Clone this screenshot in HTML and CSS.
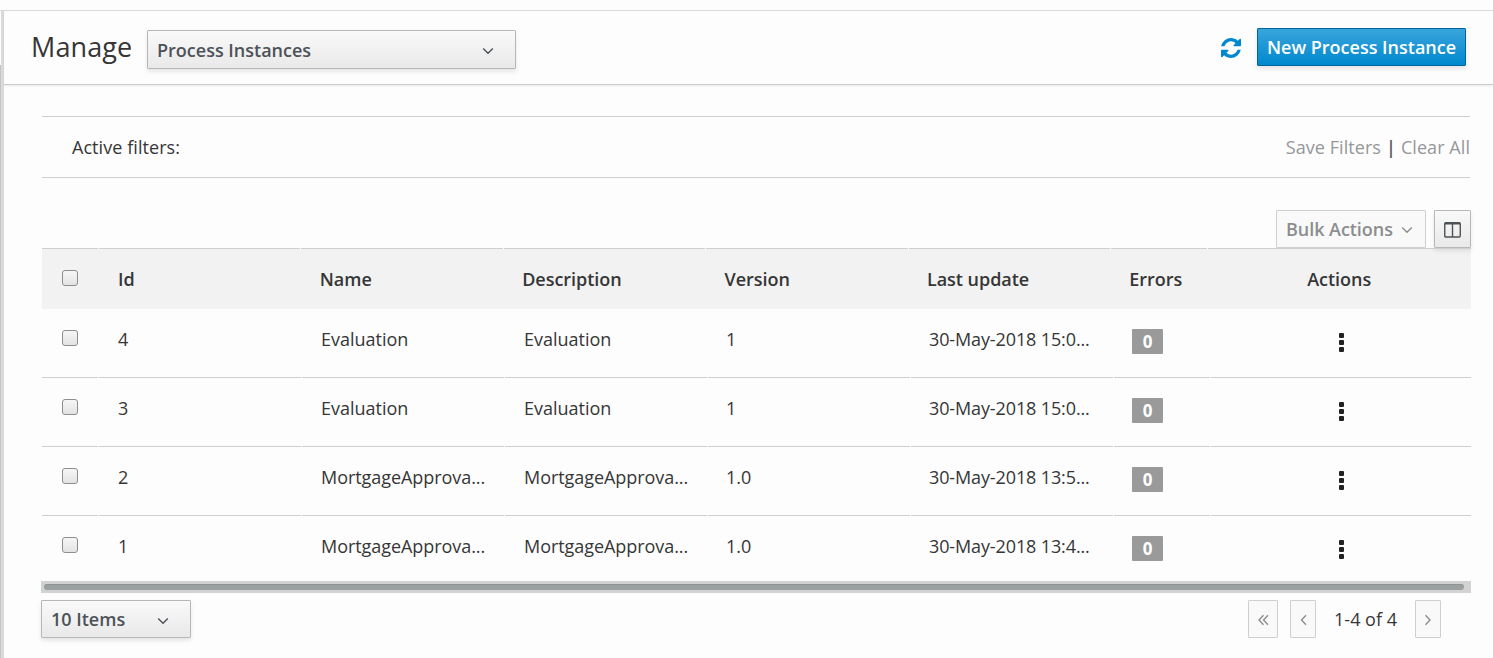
FILE: index.html
```
<!DOCTYPE html>
<html lang="en">
<head>
<meta charset="utf-8">
<title>Manage Process Instances</title>
<link rel="stylesheet" href="styles.css">
</head>
<body>
<div class="rail"><div class="rail-edge"></div></div>
<main class="page">
  <header class="topbar">
    <h1 class="title">Manage</h1>
    <button class="btn select"><span>Process Instances</span><svg class="chev" viewBox="0 0 12 8"><path d="M1.2 1.400 6 6.200 10.800 1.400"/></svg></button>
    <svg class="refresh" viewBox="0 0 1536 1536"><path d="M1511 928q0 5-1 7-64 268-268 434.500T764 1536q-146 0-282.500-55T238 1324l-129 129q-19 19-45 19t-45-19-19-45V960q0-26 19-45t45-19h448q26 0 45 19t19 45-19 45l-137 137q71 66 161 102t187 36q134 0 250-65t186-179q11-17 53-117 8-23 30-23h192q13 0 22.500 9.500t9.500 22.500zm25-800v448q0 26-19 45t-45 19h-448q-26 0-45-19t-19-45 19-45l138-138Q969 256 768 256q-134 0-250 65T332 500q-11 17-53 117-8 23-30 23H50q-13 0-22.500-9.500T18 608v-7q65-268 270-434.500T768 0q146 0 284 55.500T1297 212l130-129q19-19 45-19t45 19 19 45z"/></svg>
    <button class="btn primary">New Process Instance</button>
  </header>
  <section class="content">
    <div class="filters">
      <span>Active filters:</span>
      <div class="filter-links"><a>Save Filters</a><b>|</b><a>Clear All</a></div>
    </div>
    <div class="tools">
      <button class="btn disabled bulk"><span>Bulk Actions</span><svg class="chev" viewBox="0 0 12 8"><path d="M1.2 1.400 6 6.200 10.800 1.400"/></svg></button>
      <button class="btn columns"><svg viewBox="0 0 17 16"><path d="M1 .5h15v2H1z" class="solid"/><rect x=".75" y=".75" width="15.500" height="14.200" rx="1"/><path d="M8.500 2v13"/></svg></button>
    </div>
    <div class="grid">
      <div class="row head"><div><i class="check"></i></div><div>Id</div><div>Name</div><div>Description</div><div>Version</div><div>Last update</div><div>Errors</div><div class="act">Actions</div></div>
      <div class="row"><div><i class="check"></i></div><div>4</div><div>Evaluation</div><div>Evaluation</div><div class="ver">1</div><div class="date">30-May-2018 15:0...</div><div class="err"><span class="badge">0</span></div><div class="act"><span class="kebab"><i></i><i></i><i></i></span></div></div>
      <div class="row"><div><i class="check"></i></div><div>3</div><div>Evaluation</div><div>Evaluation</div><div class="ver">1</div><div class="date">30-May-2018 15:0...</div><div class="err"><span class="badge">0</span></div><div class="act"><span class="kebab"><i></i><i></i><i></i></span></div></div>
      <div class="row"><div><i class="check"></i></div><div>2</div><div class="long">MortgageApprova...</div><div class="long">MortgageApprova...</div><div class="ver">1.0</div><div class="date">30-May-2018 13:5...</div><div class="err"><span class="badge">0</span></div><div class="act"><span class="kebab"><i></i><i></i><i></i></span></div></div>
      <div class="row last"><div><i class="check"></i></div><div>1</div><div class="long">MortgageApprova...</div><div class="long">MortgageApprova...</div><div class="ver">1.0</div><div class="date">30-May-2018 13:4...</div><div class="err"><span class="badge">0</span></div><div class="act"><span class="kebab"><i></i><i></i><i></i></span></div></div>
    </div>
    <div class="scroll"><div class="thumb"></div></div>
    <footer class="pager">
      <button class="btn items"><span>10 Items</span><svg class="chev" viewBox="0 0 12 8"><path d="M1.2 1.400 6 6.200 10.800 1.400"/></svg></button>
      <button class="btn disabled first"><svg viewBox="0 0 11 12"><path d="M5.500 1.200 1 6l4.500 4.800M10 1.200 5.500 6 10 10.800"/></svg></button>
      <button class="btn disabled step"><svg viewBox="0 0 11 12"><path d="M8 1.200 3.500 6 8 10.800"/></svg></button>
      <span class="range">1-4 of 4</span>
      <button class="btn disabled step"><svg viewBox="0 0 11 12"><path d="M2.500 1.200 7 6 2.500 10.800"/></svg></button>
    </footer>
  </section>
</main>
</body>
</html>
```
FILE: styles.css
```
* { box-sizing: border-box; }
body {
  margin: 0; height: 658px; padding-top: 10px; display: flex; overflow: hidden;
  background: #fdfdfd; color: #363636;
  font: 18px/26px "Open Sans", "Noto Sans", sans-serif;
}
.rail { width: 4px; flex: none; border-top: 1px solid #d9d9d9; background: linear-gradient(90deg, #fdfdfd 1px, #dbdbdb 1px); }
.rail-edge { width: 1px; height: 593px; margin-top: 54px; background: #c6c4c4; }
.page { flex: 1; min-width: 0; }
.topbar {
  height: 75px; display: flex; align-items: flex-start; padding: 0 27px 0 27px;
  border-top: 1px solid #d9d9d9; border-bottom: 1px solid #cbcbcb; box-shadow: 0 1px 2px rgba(0,0,0,.09);
}
.title { margin: 17px 0 0; width: 116px; font-size: 27px; line-height: 38px; font-weight: 400; letter-spacing: .1px; white-space: nowrap; }
.btn {
  height: 39px; display: flex; align-items: center; margin: 0; padding: 0 9px; font: inherit; font-weight: 600;
  color: #4d5258; background: linear-gradient(#f9f9f9, #e9e9e9); border: 1px solid #b7b7b7; border-radius: 1px;
  box-shadow: 0 3px 4px rgba(0,0,0,.09); white-space: nowrap;
}
.btn svg { fill: none; stroke: currentColor; stroke-width: 1.4; }
.chev { width: 12px; height: 8px; margin-top: 2px; }
.select { width: 369px; margin-top: 19px; justify-content: space-between; padding-right: 21px; }
.select span { margin-top: 1px; }
.refresh { width: 20px; height: 20px; margin: 27px 16px 0 auto; fill: #0088ce; }
.primary { width: 209px; height: 38px; margin-top: 17px; justify-content: center; padding: 0; color: #fff; background: linear-gradient(#39a5dc, #0088ce); border-color: #00659c; }
.content { padding: 31px 22px 0 37px; }
.filters { margin-left: 1px; margin-right: 1px; height: 62px; display: flex; align-items: center; justify-content: space-between; padding-left: 30px; border: solid #cfcfcf; border-width: 1px 0; letter-spacing: .06px; }
.filter-links { display: flex; gap: 5px; color: #96979a; }
.filter-links b { font-weight: 600; color: #555; }
.tools { display: flex; justify-content: flex-end; gap: 8px; padding-top: 32px; height: 70px; }
.disabled { color: #8b8d8f; background: #f9f9f9; border-color: #cfcfcf; box-shadow: none; }
.bulk { width: 150px; height: 38px; justify-content: space-between; padding-right: 12px; letter-spacing: -.05px; }
.columns { width: 37px; height: 38px; padding: 0; justify-content: center; }
.columns svg { width: 17px; height: 16px; margin-top: 1px; }
.columns .solid { fill: currentColor; stroke: none; }
.grid { margin-left: 1px; }
.row { display: grid; grid-template-columns: 56px 202px 202px 202px 202px 202px 96px 1fr; column-gap: 1px; height: 69px; }
.row > div { border-bottom: 1px solid #cfcfcf; padding: 17px 0 0 19px; white-space: nowrap; overflow: hidden; }
.row > div:first-child { padding-left: 20px; }
.row > .act { display: flex; justify-content: center; padding-left: 0; }
.row > .ver, .row > .date, .row > .err { padding-left: 18px; }
.row > .date { letter-spacing: -.12px; }
.row > .long { letter-spacing: -.06px; }
.head { height: 61px; font-weight: 600; grid-template-columns: 56px 201.400px 201.400px 201.400px 201.400px 201.400px 96px 1fr; background: linear-gradient(#fdfdfd 1px, #f2f2f2 1px); }
.head > div { border-top: 1px solid #cfcfcf; border-bottom: 0; }
.head > div:nth-child(n+3) { padding-left: 18.400px; letter-spacing: -.03px; }
.head > .act { padding-right: 19px; }
.last { height: 66px; }
.row.last > div { border-bottom: 0; }
.check { display: block; width: 16px; height: 16px; margin-top: 4px; border: 1px solid #8e8e8e; border-radius: 3px; background: linear-gradient(#f6f6f6, #e3e3e3); }
.badge { display: block; width: 31px; height: 25px; margin-top: 3px; border-radius: 1px; background: #9a9a9a; color: #fff; font-size: 17px; font-weight: 700; line-height: 26px; text-align: center; }
.kebab { display: flex; flex-direction: column; gap: 2px; margin-top: 7px; }
.kebab i { width: 5px; height: 5px; border-radius: 1px; background: #222; }
.scroll { height: 12px; margin-top: -1px; padding: 3px 7px 3px 3px; background: #d2d2d2; }
.thumb { height: 6px; border-radius: 3px; background: #9ba0a0; border-top: 1px solid #8d9292; }
.pager { display: flex; align-items: flex-start; padding-top: 7px; padding-right: 30px; }
.pager .btn { height: 38px; }
.items { width: 150px; justify-content: space-between; padding-right: 21px; margin-right: auto; }
.items .chev { margin-top: 3px; }
.pager .first, .pager .step { padding: 0; justify-content: center; }
.first { width: 30px; margin-right: 12px; }
.step { width: 26px; }
.first svg, .step svg { width: 11px; height: 12px; margin-top: 1px; }
.range { width: 99px; text-align: center; line-height: 38px; }
```
